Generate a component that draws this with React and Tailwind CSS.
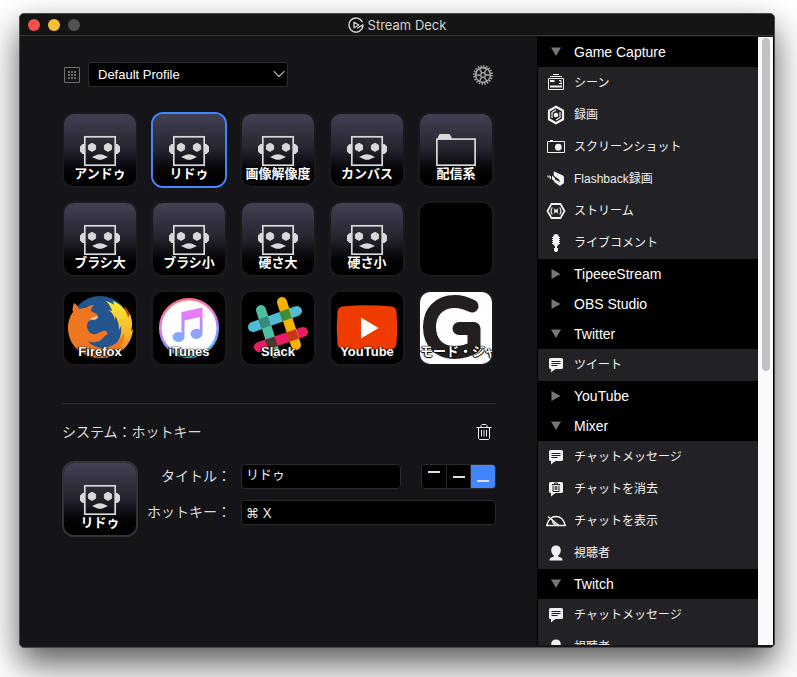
import { useState } from "react";
import { ChevronDown } from "lucide-react";

const KEYS = [
  { id: "undo", title: "アンドゥ", art: "robot" },
  { id: "redo", title: "リドゥ", art: "robot" },
  { id: "resolution", title: "画像解像度", art: "robot" },
  { id: "canvas", title: "カンバス", art: "robot" },
  { id: "stream", title: "配信系", art: "folder" },
  { id: "brush-up", title: "ブラシ大", art: "robot" },
  { id: "brush-down", title: "ブラシ小", art: "robot" },
  { id: "hard-up", title: "硬さ大", art: "robot" },
  { id: "hard-down", title: "硬さ小", art: "robot" },
  { id: "empty", title: "", art: "none" },
  { id: "firefox", title: "Firefox", art: "firefox" },
  { id: "itunes", title: "iTunes", art: "itunes" },
  { id: "slack", title: "Slack", art: "slack" },
  { id: "youtube", title: "YouTube", art: "youtube" },
  { id: "mode", title: "モード・ジャ", art: "g" },
];

const GROUPS = [
  {
    name: "Game Capture",
    open: true,
    items: [
      { icon: "scene", label: "シーン" },
      { icon: "record", label: "録画" },
      { icon: "screenshot", label: "スクリーンショット" },
      { icon: "flashback", label: "Flashback録画" },
      { icon: "stream", label: "ストリーム" },
      { icon: "mic", label: "ライブコメント" },
    ],
  },
  { name: "TipeeeStream", open: false, items: [] },
  { name: "OBS Studio", open: false, items: [] },
  { name: "Twitter", open: true, items: [{ icon: "chat", label: "ツイート" }] },
  { name: "YouTube", open: false, items: [] },
  {
    name: "Mixer",
    open: true,
    items: [
      { icon: "chat", label: "チャットメッセージ" },
      { icon: "clear", label: "チャットを消去" },
      { icon: "hidden", label: "チャットを表示" },
      { icon: "viewer", label: "視聴者" },
    ],
  },
  {
    name: "Twitch",
    open: true,
    items: [
      { icon: "chat", label: "チャットメッセージ" },
      { icon: "viewer", label: "視聴者" },
    ],
  },
];

const ART = {
  none: null,
  robot: (
    <g fill="#d9d9d9">
      <rect x="20.8" y="22.8" width="30.4" height="28.4" fill="none" stroke="#d9d9d9" strokeWidth="1.7" />
      <path d="M20 30h-1.500L16 32.500v5l2.500 2.500H20zM52 30h1.500L56 32.500v5L53.500 40H52z" />
      <path d="M28 29.200l3.600 2v4.200L28 37.400l-3.600-2v-4.200zM44 29.200l3.600 2v4.200L44 37.400l-3.600-2v-4.200z" stroke="#d9d9d9" strokeWidth="0.900" />
      <path d="M28 43l5-2.300q3-1 6 0l5 2.300-5 2.300q-3 1-6 0z" />
    </g>
  ),
  folder: (
    <g>
      <path d="M18 25v-2l1.500-3h10l2 3v2z" fill="#d9d9d9" />
      <rect x="16.900" y="25.100" width="38.200" height="26.100" fill="none" stroke="#d9d9d9" strokeWidth="1.700" />
    </g>
  ),
  firefox: (
    <g>
      <defs>
        <linearGradient id="tail" x1="0" y1="0" x2="0" y2="1">
          <stop offset="0" stopColor="#f9ee3a" />
          <stop offset="0.55" stopColor="#f7b72a" />
          <stop offset="1" stopColor="#ee7623" />
        </linearGradient>
      </defs>
      <circle cx="36" cy="34" r="30" fill="#24558f" />
      <path d="M60 14c6 5 8 12 8 21l-4-3z" fill="#b9471c" />
      <path d="M49 9c9 4 14 10 15 17l2-4c2 6 3 11 1 17l2-2c-1 16-14 29-33 29l-8-6c18 0 31-8 29-26l-2 4c0-6-1-10-4-14v5c-1-8-5-10-7-11l4 1c-1-4-3-7-6-10 3 1 6 2 8 4z" fill="url(#tail)" />
      <path d="M10 11c2 1 4 3 5 6 3-1 5-1 7-1 2-2 5-3 8-3-2 2-3 4-3 6l6 3 1 3-7 3c-3 1-4 3-4 7 1 5 4 8 9 7 4-1 6-4 10-3l2 3c-3 1-4 3-6 5-4 4-10 4-14 2 5 7 16 9 25 4 5-2 9-7 11-12 1 14-8 25-24 25C18 66 4 53 4 36c0-7 2-12 5-16-1-3 0-6 1-9z" fill="#f07722" />
      <path d="M26 27l7-3 1 2-4 2z" fill="#fbd3ae" />
    </g>
  ),
  itunes: (
    <g>
      <defs>
        <linearGradient id="ring" x1="0.3" y1="0" x2="0.6" y2="1">
          <stop offset="0" stopColor="#ff7775" />
          <stop offset="0.3" stopColor="#f07cd0" />
          <stop offset="0.6" stopColor="#a481ff" />
          <stop offset="1" stopColor="#35d3f0" />
        </linearGradient>
        <linearGradient id="note" x1="0" y1="0" x2="0" y2="1">
          <stop offset="0.2" stopColor="#ea7cff" />
          <stop offset="0.5" stopColor="#b18cff" />
          <stop offset="0.9" stopColor="#7caeff" />
        </linearGradient>
      </defs>
      <circle cx="36" cy="36" r="28.800" fill="#fff" stroke="url(#ring)" strokeWidth="2.600" />
      <path d="M28.500 20l21-4.500V42a6 5 0 1 1-2.700-4.300V25l-15.300 3.500V45a6 5 0 1 1-3-4.300z" fill="url(#note)" />
    </g>
  ),
  slack: (
    <g>
      <g strokeWidth="10" strokeLinecap="round">
        <path d="M11 35L55 19" stroke="#4fbbd4" />
        <path d="M19 18L33 61" stroke="#4dbf9f" />
        <path d="M17 55L61 40" stroke="#e81d63" />
        <path d="M40 10L54 53" stroke="#f5b300" />
      </g>
      <rect x="17.500" y="25.500" width="10" height="10" fill="#37877b" transform="rotate(-19 22.5 30.5)" />
      <rect x="38.500" y="18" width="10" height="10" fill="#388e3c" transform="rotate(-19 43.5 23)" />
      <rect x="24.500" y="46" width="10" height="10" fill="#4e342e" transform="rotate(-19 29.5 51)" />
      <rect x="45.500" y="38.500" width="10" height="10" fill="#c53612" transform="rotate(-19 50.5 43.5)" />
    </g>
  ),
  youtube: (
    <g>
      <path d="M11 14.500q25-2.500 50 0 4 1 4.500 5 1.500 16 0 32-.5 4.500-4.500 5.500-25 2-50 0-4-1-4.500-5.500-1.500-16 0-32 .5-4 4.500-5z" fill="#f03b00" />
      <path d="M30 25.500L47.500 36 30 46.500z" fill="#fff" />
    </g>
  ),
  g: (
    <g>
      <rect width="72" height="72" fill="#fff" />
      <path d="M52 14C46 11 41 9.500 35 9.500 19 9.500 9.500 20 9.500 35S19 60.500 34 60.500c8 0 15-2 20-5.500V36.500H39" fill="none" stroke="#231f20" strokeWidth="13" strokeLinecap="round" strokeLinejoin="round" />
    </g>
  ),
};

const bubble = "M4.500 3h11Q17 3 17 4.500v8q0 1.500-1.500 1.500H9.500L5 17.500V14h-.500Q3 14 3 12.500v-8Q3 3 4.500 3z";

const ICONS = {
  scene: (
    <g fill="none" stroke="#f1f1f1">
      <path d="M7 1.500h6M4 3.500h12M2.500 5.500h15v11h-15z" />
      <path d="M4 13.500h12M4 8h4.500" strokeWidth="2" />
      <path d="M13 7.500h2v4M13 10.500h3" />
    </g>
  ),
  record: (
    <g fill="none" stroke="#f1f1f1">
      <path d="M10 1.700l7 4v8.600l-7 4-7-4V5.700z" strokeWidth="2.200" />
      <path d="M6 13V7.500l4-2.500M14 7v5.500L10 15" strokeWidth="1.200" />
      <circle cx="10" cy="10" r="2.300" fill="#f1f1f1" stroke="none" />
    </g>
  ),
  screenshot: (
    <g fill="#f1f1f1">
      <path d="M1.500 4.500h17v11h-17z" fill="none" stroke="#f1f1f1" />
      <path d="M4 3h3v1.500H4z" />
      <circle cx="12.300" cy="10.200" r="3.400" />
    </g>
  ),
  flashback: (
    <g fill="#f1f1f1">
      <path d="M7.700 2.300l9.300 4.200 1 1.500v6L14 17l-6-4 1.500-2.500 4 2.500v-2L7.700 6.500z" />
      <path d="M6 6.500l3 2.500v3.500L6 10.500zM3.500 6L5 7.500v3L3.500 9zM1.500 6l1.200 1v2L1.500 8z" />
    </g>
  ),
  stream: (
    <g fill="none" stroke="#f1f1f1">
      <path d="M5.500 3h9l4 7-4 7h-9l-4-7z" strokeWidth="1.800" />
      <path d="M6.300 6.500q-2.500 3.500 0 7M13.700 6.500q2.500 3.500 0 7" strokeWidth="1.200" />
      <path d="M8.300 7.500v5L10 10.800l1.700 1.700v-5L10 9.200z" fill="#f1f1f1" strokeWidth="0.300" />
    </g>
  ),
  mic: (
    <g fill="#f1f1f1">
      <path d="M7 4q.5-3 3-3t3 3v7l-1.500 2h-3L7 11z" />
      <path d="M6 4.500h8M6 6.500h8M6 8.500h8M6 10.500h8" stroke="#f1f1f1" />
      <path d="M9 13h2v2H9zM8 15h4v2.500L11 19H9l-1-1.500z" />
    </g>
  ),
  chat: (
    <g>
      <path d={bubble} fill="#f1f1f1" />
      <path d="M5.500 6.500h9M5.500 8.500h9M5.500 10.500h6" stroke="#222126" />
    </g>
  ),
  clear: (
    <g>
      <path d={bubble} fill="#f1f1f1" />
      <path d="M6 5.500h8M8.500 5V4h3v1M7 6.500v6h6v-6M9.200 7v4M10.800 7v4" fill="none" stroke="#222126" />
    </g>
  ),
  hidden: (
    <g fill="none" stroke="#f1f1f1" strokeWidth="1.400">
      <path d="M.7 14.500Q3 5.500 10 5.500t9.300 9zM2 5.500l11 9" />
      <path d="M6.500 8.500q-1 5 4 5.500L6 10z" fill="#f1f1f1" strokeWidth="0.800" />
    </g>
  ),
  viewer: (
    <path d="M10 2.500c3 0 4.800 2 4.800 4.700 0 2.200-1 4.300-2.600 5.300v1l3.600 1.500q.7.500.7 2.500H3.500q0-2 .7-2.500l3.600-1.500v-1C6.200 11.500 5.200 9.400 5.200 7.200 5.200 4.500 7 2.500 10 2.500z" fill="#f1f1f1" />
  ),
};

function KeyFace({ item }) {
  const plain = item.art === "robot" || item.art === "folder";
  return (
    <span
      className={`relative block size-[72px] overflow-hidden rounded-[10px] ${
        plain ? "bg-linear-to-b from-[#434154] via-[#24232d] to-black" : "bg-black"
      }`}
    >
      <svg viewBox="0 0 72 72" className="size-full" aria-hidden="true">
        {ART[item.art]}
      </svg>
      <span className="absolute inset-x-0 bottom-1 block text-center text-[13px] leading-4 font-bold whitespace-nowrap text-white [text-shadow:0_0_1px_#000,0_1px_1px_#000,1px_0_1px_#000,-1px_0_1px_#000]">
        {item.title}
      </span>
    </span>
  );
}

function TitleBar() {
  return (
    <header className="relative flex h-[22px] shrink-0 items-center justify-center border-b border-[#343434] bg-[#141414]">
      <div className="absolute inset-y-0 left-2 flex items-center gap-2">
        <button aria-label="Close" className="size-3 rounded-full bg-[#f1524f]" />
        <button aria-label="Minimize" className="size-3 rounded-full bg-[#f8bf30]" />
        <button aria-label="Zoom" className="size-3 rounded-full bg-[#515151]" />
      </div>
      <h1 className="flex items-center gap-1 font-[Inter] text-[13px] leading-5 text-[#d4d4d0]">
        <svg viewBox="0 0 16 16" className="size-4" fill="none" stroke="#d4d4d0" strokeLinecap="round" strokeLinejoin="round" aria-hidden="true">
          <path d="M14.200 4.800A7 7 0 1 0 14.900 9.200L14.900 7.800 9.500 11" strokeWidth="1.400" />
          <path d="M6 5.200v5.600L10.800 8z" strokeWidth="1.300" />
        </svg>
        Stream Deck
      </h1>
    </header>
  );
}

function ProfileBar() {
  return (
    <div className="flex items-center">
      <svg viewBox="0 0 16 16" className="ml-0.5 size-4" aria-hidden="true">
        <path d="M.5.5h15v15H.5z" fill="none" stroke="#6b6b6b" />
        <path d="M4 5h8M4 8h8M4 11h8" stroke="#6b6b6b" strokeWidth="2" strokeDasharray="2 1" />
      </svg>
      <div className="relative ml-2 h-[25px] w-[200px]">
        <select
          aria-label="Profile"
          className="size-full appearance-none rounded-[3px] border border-[#2b2b2b] bg-black pl-[9px] text-[13px] text-white"
        >
          <option>Default Profile</option>
        </select>
        <ChevronDown className="pointer-events-none absolute top-0.5 -right-px size-5 text-[#a5a5a5]" strokeWidth={1.5} />
      </div>
      <button aria-label="Settings" className="mr-[3px] ml-auto">
        <svg viewBox="0 0 20 20" className="size-5" fill="none" stroke="#a3a3a3" aria-hidden="true">
          <circle cx="10" cy="10" r="9" strokeWidth="1.800" strokeDasharray="1.414 1.414" />
          <circle cx="10" cy="10" r="7.400" strokeWidth="1.600" />
          <circle cx="10" cy="10" r="2.300" strokeWidth="1.300" />
          <path d="M12 10h5M3 10h5M11 11.700l2.500 4.400M6.500 3.900L9 8.300M9 11.700l-2.500 4.400M13.500 3.900L11 8.300" strokeWidth="1.400" />
        </svg>
      </button>
    </div>
  );
}

function Inspector({ item }) {
  const [align, setAlign] = useState("bottom");
  const aligns = [
    { id: "top", place: "items-start pt-1.5" },
    { id: "middle", place: "items-center" },
    { id: "bottom", place: "items-end pb-1.5" },
  ];

  return (
    <section className="mt-[37px] border-t border-[#2c2c2d]">
      <div className="mt-4 flex h-6 items-center justify-between">
        <h2 className="text-sm text-[#dcdcdc]">システム：ホットキー</h2>
        <button aria-label="Delete" className="mr-1">
          <svg viewBox="0 0 16 18" className="h-[18px] w-4" fill="none" stroke="#ececec" aria-hidden="true">
            <path d="M.5 4.500h15M5 4V2.500L6 1.500h4l1 1V4M2.500 4.500v11l1 1h9l1-1v-11" />
            <path d="M5.500 7v6.500M8 7v6.500M10.500 7v6.500" />
          </svg>
        </button>
      </div>
      <div className="mt-[17px] flex">
        <div className="h-[76px] shrink-0 rounded-xl border-2 border-[#343434]">
          <KeyFace item={item} />
        </div>
        <div className="mt-[3px] grid min-w-0 flex-1 grid-cols-[93px_minmax(0,1fr)] content-start gap-x-[10px] gap-y-[11px]">
          <label htmlFor="title" className="text-right text-sm leading-[25px] text-[#dcdcdc]">
            タイトル：
          </label>
          <div className="flex gap-5">
            <input
              id="title"
              defaultValue={item.title}
              className="h-[25px] min-w-0 flex-1 rounded-[4px] border border-[#2b2b2b] bg-black pb-1.5 pl-1 text-[13px] text-[#ececec]"
            />
            <div className="flex h-[25px] w-[75px] shrink-0 gap-px overflow-hidden rounded-[4px] border border-[#2b2b2b] bg-[#2b2b2b]">
              {aligns.map((a) => (
                <button
                  key={a.id}
                  aria-label={`Title ${a.id}`}
                  aria-pressed={align === a.id}
                  onClick={() => setAlign(a.id)}
                  className={`flex flex-1 justify-center ${a.place} ${align === a.id ? "bg-[#4286ff]" : "bg-black"}`}
                >
                  <span className="h-0.5 w-3 bg-[#dedede]" />
                </button>
              ))}
            </div>
          </div>
          <label htmlFor="hotkey" className="text-right text-sm leading-[25px] text-[#dcdcdc]">
            ホットキー：
          </label>
          <input
            id="hotkey"
            defaultValue="⌘ X"
            className="h-[25px] min-w-0 rounded-[4px] border border-[#2b2b2b] bg-black pl-1 font-[Inter] text-[13px] text-[#ececec]"
          />
        </div>
      </div>
    </section>
  );
}

function Sidebar() {
  return (
    <aside className="mt-px mb-0.5 flex w-[237px] shrink-0 overflow-hidden bg-black px-px">
      <nav className="min-w-0 flex-1">
        {GROUPS.map((group) => (
          <div key={group.name}>
            <button className="flex h-[30px] w-full items-center gap-2 pl-2 text-sm text-white">
              <svg viewBox="0 0 20 20" className="size-5" fill="#777" aria-hidden="true">
                <path d={group.open ? "M5 5.500h10L10 14z" : "M5.500 5l9 5-9 5z"} />
              </svg>
              {group.name}
            </button>
            <ul className="bg-[#222126]">
              {group.items.map((item) => (
                <li key={item.label} className="flex h-8 items-center gap-2 pl-2 text-xs text-[#f1f1f1]">
                  <svg viewBox="0 0 20 20" className="size-5 shrink-0" aria-hidden="true">
                    {ICONS[item.icon]}
                  </svg>
                  {item.label}
                </li>
              ))}
            </ul>
          </div>
        ))}
      </nav>
      <div className="w-[15px] bg-[#fafafa] pt-px pr-[3px] pl-1">
        <div className="h-[333px] rounded-full bg-[#c2c2c2]" />
      </div>
    </aside>
  );
}

export default function App() {
  const [selected, setSelected] = useState("redo");
  const current = KEYS.find((k) => k.id === selected);

  return (
    <div className="flex h-screen overflow-hidden bg-white pt-[13px] pr-[22px] pb-[29px] pl-[19px] font-['Liberation_Sans','Noto_Sans_CJK_JP',sans-serif]">
      <div className="flex min-w-0 flex-1 flex-col overflow-hidden rounded-[5px] border border-[#4a4a4a] bg-[#151419] shadow-[0_16px_34px_rgba(0,0,0,0.65)]">
        <TitleBar />
        <div className="flex min-h-0 flex-1">
          <main className="min-w-0 flex-1 pt-[26px] pr-[41px] pl-[42px]">
            <ProfileBar />
            <div className="mt-[25px] grid grid-cols-[repeat(5,76px)] gap-[13px]">
              {KEYS.map((item) => (
                <button
                  key={item.id}
                  aria-label={item.title || "Empty key"}
                  onClick={() => setSelected(item.id)}
                  className={`size-[76px] rounded-xl border-2 ${
                    item.id === selected ? "border-[#4286ff]" : "border-[#1a1a1d]"
                  }`}
                >
                  <KeyFace item={item} />
                </button>
              ))}
            </div>
            <Inspector key={current.id} item={current} />
          </main>
          <Sidebar />
        </div>
      </div>
    </div>
  );
}
